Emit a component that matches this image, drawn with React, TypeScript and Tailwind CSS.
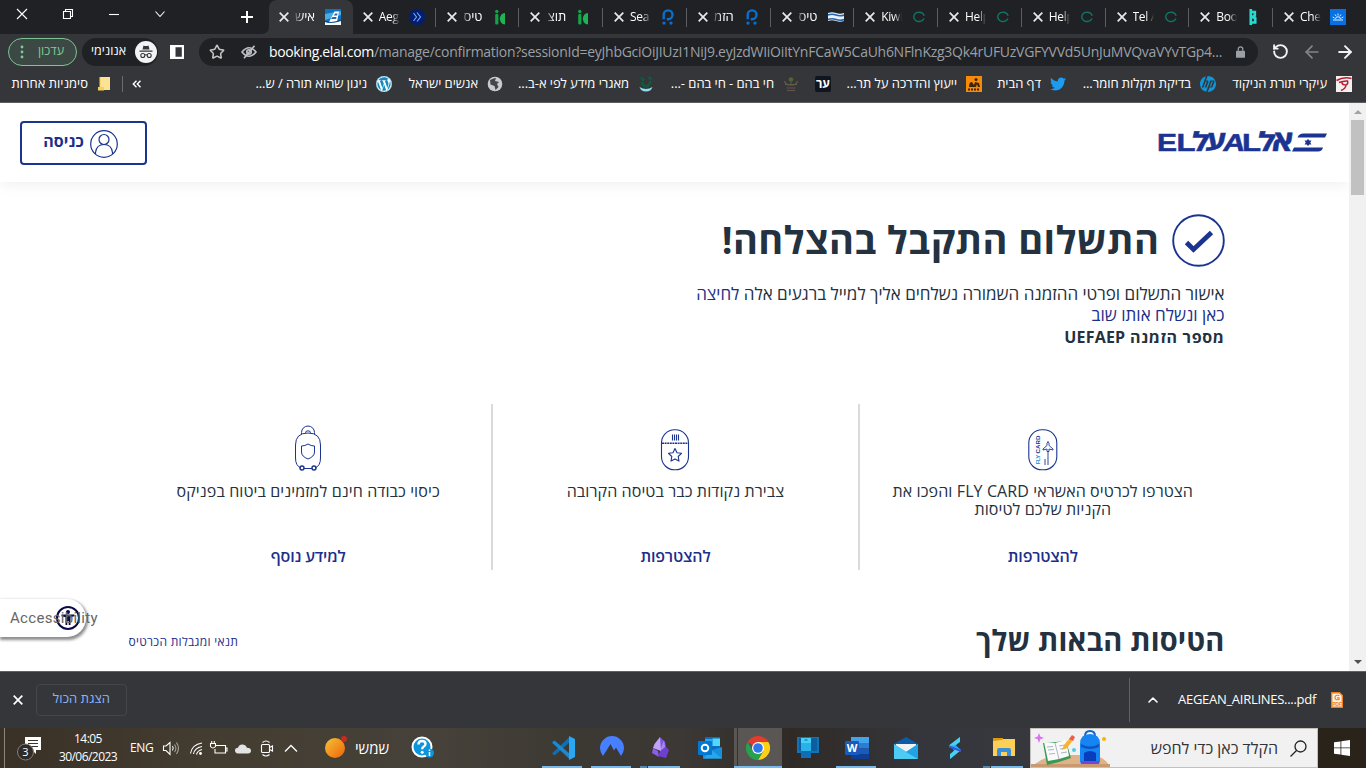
import React from "react";
import { FaTwitter, FaWordpress } from "react-icons/fa";
import { SiHp } from "react-icons/si";
import { ArrowLeft, ArrowRight, ChevronUp, RotateCcw, Star } from "lucide-react";

const Close = ({ className = "" }: { className?: string }) => (
  <svg viewBox="0 0 10 10" className={`size-[10px] shrink-0 ${className}`} stroke="currentColor" strokeWidth="1.700">
    <path d="M.7.7 9.300 9.300M9.300.7.7 9.300" />
  </svg>
);

/* ---------- tab favicons ---------- */

const ElAlFav = () => (
  <svg viewBox="0 0 16 16" className="size-4">
    <rect width="16" height="16" fill="#0b74c0" />
    <path d="M0 5 16 2v4L0 11z" fill="#4bace2" />
    <path d="M9.500 2.500H14L12 13H4z" fill="#fff" />
    <path d="M10 4.500h2.500l-.4 2H9zM7.500 8h4l-.4 2H6z" fill="#2a62ae" />
    <path d="M0 16v-3Q6 15 16 11.500V16z" fill="#f4f9fc" />
    <path d="M0 11.800q7 2.600 16-1v1.300q-8 3-16 .8z" fill="#123f83" />
  </svg>
);
const AegeanFav = () => (
  <svg viewBox="0 0 16 16" className="size-4">
    <circle cx="8" cy="8" r="8" fill="#001e73" />
    <path d="m4.500 4 3 4-3 4M8 3.500l3.500 4.500L8 12.500" fill="none" stroke="#7fa4ea" strokeWidth="1.200" />
  </svg>
);
const IcFav = () => (
  <svg viewBox="0 0 16 16" className="size-4">
    <circle cx="3.800" cy="2.500" r="1.700" fill="#14a34a" />
    <rect x="2.200" y="5" width="3.200" height="10.500" rx="1" fill="#14a34a" />
    <path d="M12 4v11.500A5.800 5.800 0 0 1 12 4z" fill="#1fb455" />
    <path d="M6.500 9.500 12 4.500V15z" fill="#1fb455" />
  </svg>
);
const PFav = () => (
  <svg viewBox="0 0 16 16" className="size-4" fill="none" stroke="#0770cf">
    <path d="M3.700 10.300V5.800a4.400 4.400 0 1 1 4.400 4.400H6.800" strokeWidth="2.400" />
    <circle cx="4" cy="14.100" r="1.700" fill="#0770cf" stroke="none" />
    <circle cx="11" cy="14.100" r="1.700" fill="#0770cf" stroke="none" />
  </svg>
);
const WaveFav = () => (
  <svg viewBox="0 0 16 16" className="size-4">
    <path d="M0 4q4-1.500 8 0t8 0v8q-4 1.500-8 0t-8 0z" fill="#e9f1fa" />
    <path d="M0 6q4-1.500 8 0t8 0M0 10.500q4-1.500 8 0t8 0" stroke="#2565ae" strokeWidth="1.700" fill="none" />
  </svg>
);
const RingFav = () => (
  <svg viewBox="0 0 16 16" className="size-4">
    <path d="M13 9.500A5.300 4.700 0 1 1 13.200 6.800" fill="none" stroke="#0d7767" strokeWidth="1.400" />
  </svg>
);
const BFav = () => (
  <svg viewBox="0 0 16 16" className="size-4">
    <path d="M4.800 0v16M4.800 3h4v3.800L6.500 8l2.700 1.200V13.500H4.800" fill="none" stroke="#24dcd0" strokeWidth="2.700" />
  </svg>
);
const SunFav = () => (
  <svg viewBox="0 0 16 16" className="size-4">
    <rect width="16" height="16" fill="#0770e3" />
    <path d="M3 11h10M5.500 10a2.500 2.200 0 0 1 5 0M8 4.500v2M5 5.500l1.200 1.700M11 5.500 9.800 7.200M2.700 8l1.800 1M13.300 8l-1.800 1" stroke="#fff" strokeWidth=".9" fill="none" />
  </svg>
);

type TabInfo = { title: string; rtl?: boolean; icon: React.ReactNode; active?: boolean; sep?: boolean };
const tabs: TabInfo[] = [
  { title: "איש", rtl: true, icon: <ElAlFav />, active: true },
  { title: "Aeg", icon: <AegeanFav />, sep: true },
  { title: "טיס", rtl: true, icon: <IcFav />, sep: true },
  { title: "תוצ", rtl: true, icon: <IcFav />, sep: true },
  { title: "Sea", icon: <PFav />, sep: true },
  { title: "הזמ", rtl: true, icon: <PFav />, sep: true },
  { title: "טיס", rtl: true, icon: <WaveFav />, sep: true },
  { title: "Kiwi", icon: <RingFav />, sep: true },
  { title: "Help", icon: <RingFav />, sep: true },
  { title: "Help", icon: <RingFav />, sep: true },
  { title: "Tel A", icon: <RingFav />, sep: true },
  { title: "Boo", icon: <BFav />, sep: true },
  { title: "Che", icon: <SunFav /> },
];

const Tab = ({ t }: { t: TabInfo }) => (
  <div className={`relative flex h-[34px] w-[83.750px] shrink-0 items-center pl-[10px] ${t.active ? "rounded-t-[8px] bg-[#35363a]" : ""}`}>
    <Close className="text-[#e8eaed]" />
    {t.rtl ? (
      <div dir="rtl" className="mr-[10px] ml-[4px] w-[22px] overflow-hidden text-[13px] whitespace-nowrap text-white [mask-image:linear-gradient(to_left,black_55%,transparent)]">{t.title}</div>
    ) : (
      <div className="mr-[9px] ml-[6px] w-[21px] overflow-hidden text-[12px] tracking-[-0.3px] whitespace-nowrap text-white [mask-image:linear-gradient(to_right,black_60%,transparent)]">{t.title}</div>
    )}
    {t.icon}
    {t.sep && <div className="absolute top-[8px] right-[1px] h-[19px] w-px bg-[#5b5d62]" />}
  </div>
);

const TabStrip = () => (
  <div className="flex h-[34px] items-center bg-[#202124] text-white">
    <svg viewBox="0 0 269 34" className="h-[34px] w-[269px] shrink-0" fill="none" stroke="#fff">
      <path d="m17 9 10 10M27 9 17 19" strokeWidth="1.100" />
      <path d="M63.500 11.500h7v7h-7zM65.500 11.500v-2h7v7h-2" strokeWidth="1.100" />
      <path d="M109 14.500h10" strokeWidth="1.100" />
      <path d="m155.500 11.500 4.500 5 4.500-5" strokeWidth="1.100" />
      <path d="M241 17h12M247 11v12" strokeWidth="2" />
      <path d="M269 34h-8q8 0 8-8z" fill="#35363a" stroke="none" />
    </svg>
    {tabs.map((t, i) => (
      <Tab key={i} t={t} />
    ))}
  </div>
);

const Toolbar = () => (
  <div className="flex h-[35px] items-center bg-[#35363a] pl-[8px]">
    <div className="flex h-[28px] w-[69px] shrink-0 items-center justify-between rounded-full border border-[#7ac594] bg-[#3c4843] pr-[12px] pl-[11px] text-[#81c995]">
      <svg viewBox="0 0 4 14" className="h-[14px] w-[4px]" fill="currentColor">
        <circle cx="2" cy="2" r="1.400" /><circle cx="2" cy="7" r="1.400" /><circle cx="2" cy="12" r="1.400" />
      </svg>
      <span className="text-[12.500px]">עדכון</span>
    </div>
    <div className="ml-[5px] flex h-[28px] w-[76px] shrink-0 items-center justify-between rounded-full bg-[#202124] pr-[1px] pl-[9px] text-white">
      <span className="text-[12.500px] whitespace-nowrap">אנונימי</span>
      <svg viewBox="0 0 22 22" className="size-[22px] shrink-0">
        <circle cx="11" cy="11" r="11" fill="#f1f3f4" />
        <path d="M7.500 8.500 8.500 4.500q2.500 1 5 0l1 4zM4.500 9.500h13v1.200h-13z" fill="#35363a" />
        <g fill="none" stroke="#35363a" strokeWidth="1.100"><circle cx="7.800" cy="14.500" r="2" /><circle cx="14.200" cy="14.500" r="2" /><path d="M9.800 14q1.200-.6 2.400 0" /></g>
      </svg>
    </div>
    <svg viewBox="0 0 14 14" className="ml-[12px] size-[14px] shrink-0"><path d="M0 0h14v14H0zM5.500 2.200v9.600h6.300V2.200z" fill="#fff" fillRule="evenodd" /></svg>
    <div className="ml-[15px] flex h-[28px] w-[1059px] shrink-0 items-center rounded-full bg-[#202124] pl-[10px] text-[#9aa0a6]">
      <Star className="size-[16px] shrink-0 text-[#c4c7c5]" strokeWidth={2.3} />
      <svg viewBox="0 0 16 14" className="ml-[16px] h-[14px] w-[16px] shrink-0" fill="none" stroke="#bdc1c6" strokeWidth="1.700">
        <path d="M1 7q7-8.500 14 0-7 8.500-14 0z" /><circle cx="8" cy="7" r="2.200" /><path d="M3 13.200 13.500.8" />
      </svg>
      <div className="ml-[12px] w-[955px] text-[14px] whitespace-nowrap">
        <span className="tracking-[-0.36px] text-white">booking.elal.com</span>
        <span className="tracking-[-0.27px]">/manage/confirmation?sessionId=eyJhbGciOiJIUzI1NiJ9.eyJzdWIiOiItYnFCaW5CaUh6NFlnKzg3Qk4rUFUzVGFYVVd5UnJuMVQvaVYvTGp4...</span>
      </div>
      <svg viewBox="0 0 10 13" className="ml-[12px] h-[12px] w-[9px] shrink-0"><rect y="5" width="10" height="8" rx="1" fill="#9aa0a6" /><path d="M2.500 5V3.200a2.500 2.500 0 0 1 5 0V5" fill="none" stroke="#9aa0a6" strokeWidth="1.400" /></svg>
    </div>
    <RotateCcw className="ml-[14px] size-[17px] shrink-0 text-[#f1f3f4]" strokeWidth={2.7} />
    <ArrowLeft className="ml-[13px] size-[20px] shrink-0 text-[#85878b]" strokeWidth={2} />
    <ArrowRight className="ml-[13px] size-[20px] shrink-0 text-[#f1f3f4]" strokeWidth={2.3} />
  </div>
);

const Bm = ({ w, text, children }: { w: string; text: string; children: React.ReactNode }) => (
  <div className="mr-[16px] flex shrink-0 items-center gap-[9px]">
    <div dir="rtl" className={`${w} shrink-0 text-[13px] tracking-[-0.05px] whitespace-nowrap text-white`}>{text}</div>
    {children}
  </div>
);

const Bookmarks = () => (
  <div className="flex h-[34px] items-center border-b border-[#5c5d60] bg-[#35363a] pb-[3px] pl-[10px]">
    <div dir="rtl" className="w-[78px] shrink-0 text-[13px] whitespace-nowrap text-white">סימניות אחרות</div>
    <svg viewBox="0 0 14 14" className="ml-[9px] size-[14px] shrink-0"><path d="M3 0h10v13H3z" fill="#fde293" /><path d="M1 10h6v3.500H1z" fill="#f5cf57" /><path d="M3 0v10" stroke="#f5cf57" /></svg>
    <div className="ml-[11px] h-[16px] w-px shrink-0 bg-[#6a6b6e]" />
    <svg viewBox="0 0 10 8" className="mr-[114px] ml-[9px] h-[8px] w-[10px] shrink-0" fill="none" stroke="#fff" strokeWidth="1.400"><path d="M4.500.8 1.300 4l3.200 3.200M8.500.8 5.300 4l3.200 3.200" /></svg>
    <Bm w="w-[111px]" text="ניגון שהוא תורה / ש...">
      <span className="flex size-4 items-center justify-center rounded-full bg-white"><FaWordpress className="size-4 text-[#1489bd]" /></span>
    </Bm>
    <Bm w="w-[70px]" text="אנשים ישראל">
      <svg viewBox="0 0 16 16" className="size-4"><circle cx="8" cy="8" r="7.300" fill="#c9cbce" /><path d="M3 4q4-2 6-2l-1 3 4 1-2 2 1.500 3-3 3-1-4-4-1.500z" fill="#45464a" /></svg>
    </Bm>
    <Bm w="w-[110px]" text="מאגרי מידע לפי א-ב...">
      <svg viewBox="0 0 16 16" className="size-4"><path d="M1.500 11q6.500 4 13 0-1.500 4.500-6.500 4.500T1.500 11z" fill="#8fdcf2" /><path d="m3 1.500 3 3M10.500 1l3 2.500M3.500 6q2 4.500 4.500 4.500T13 5" stroke="#0f5a3e" strokeWidth="2.800" fill="none" /></svg>
    </Bm>
    <Bm w="w-[104px]" text="חי בהם - חי בהם -...">
      <svg viewBox="0 0 16 16" className="size-4" opacity=".8"><circle cx="8" cy="3.500" r="2.300" fill="#557332" /><path d="M8 6v4M1.500 5q1 4 5.500 4M14.500 5q-1 4-5.500 4M2 8.500h12M3.500 12h9M4 14.500h8" stroke="#70614e" strokeWidth="1.100" fill="none" /></svg>
    </Bm>
    <div className="mr-[16px] flex size-4 shrink-0 items-center justify-center rounded-[2px] bg-[#101620] text-[12px] leading-none font-bold text-white">ער</div>
    <Bm w="w-[110px]" text="ייעוץ והדרכה על תר...">
      <svg viewBox="0 0 16 16" className="size-4"><rect width="16" height="16" fill="#f78b08" /><circle cx="10" cy="3.500" r="1.500" fill="#402506" /><path d="M3 11q0-5 3-5l2 3 1-3 4 1 1 4h-2l-1-3-1 3z" fill="#402506" /><path d="M2 13.500h12" stroke="#402506" strokeWidth="2" strokeDasharray="2 1" /></svg>
    </Bm>
    <Bm w="w-[43px]" text="דף הבית"><FaTwitter className="size-4 text-[#1d9bf0]" /></Bm>
    <Bm w="w-[109px]" text="בדיקת תקלות חומר..."><SiHp className="size-4 text-[#0f96d6]" /></Bm>
    <Bm w="w-[95px]" text="עיקרי תורת הניקוד">
      <svg viewBox="0 0 16 16" className="size-4"><rect width="16" height="16" fill="#f7eeee" /><path d="M.5 4.500q7-4 15-2M3 6.500q5-2 9-1.500M11.500 5q1 3-1.500 4M6 6.500Q6 9 10 9q-.5 4-5 5.500" stroke="#b51f33" strokeWidth="1.500" fill="none" /></svg>
    </Bm>
  </div>
);

/* ---------- page ---------- */

const ElAlLogo = () => (
  <svg viewBox="0 0 169 22" className="h-[22px] w-[169px] overflow-visible" fill="#1b3491" stroke="#1b3491" strokeWidth="0.500">
    <g fontFamily="Liberation Sans, sans-serif" fontWeight="700" fontSize="24.500">
      <text x="-1" y="20" textLength="20" lengthAdjust="spacingAndGlyphs">E</text>
      <text x="18.500" y="20" textLength="19" lengthAdjust="spacingAndGlyphs">L</text>
      <text transform="translate(64 20) skewX(-10)" textLength="22" lengthAdjust="spacingAndGlyphs">A</text>
      <text x="84" y="20" textLength="19" lengthAdjust="spacingAndGlyphs">L</text>
    </g>
    <g fontFamily="Open Sans, sans-serif" fontWeight="700">
      <text transform="translate(31 20) skewX(-12)" fontSize="26" textLength="18" lengthAdjust="spacingAndGlyphs">ל</text>
      <text transform="translate(47 18.500) skewX(-6)" fontSize="27" textLength="20" lengthAdjust="spacingAndGlyphs">ע</text>
      <text transform="translate(97 20) skewX(-12)" fontSize="26" textLength="18" lengthAdjust="spacingAndGlyphs">ל</text>
      <text transform="translate(113 20) skewX(-8)" fontSize="29" textLength="21" lengthAdjust="spacingAndGlyphs">א</text>
    </g>
    <path stroke="none" d="M139.500 6.500q1.500-4 6-4h23.500l-2 4zM134 20.500l2-4h29q-1 4-5 4zM150 7.700l1.100 1.900h2.300l-1.100 1.900 1.100 1.900h-2.300l-1.100 1.900-1.100-1.900h-2.300l1.100-1.900-1.100-1.900h2.300z" />
  </svg>
);

const FlyCard = () => (
  <svg viewBox="0 0 30 42" className="h-[42px] w-[30px]" fill="none" stroke="#1b3491" strokeWidth="1.100">
    <rect x=".8" y=".8" width="28" height="40" rx="13" />
    <g transform="translate(11.500 35.500) rotate(-90)" fontFamily="Liberation Sans, sans-serif" fontWeight="700" fontSize="6.200" stroke="none">
      <text fill="#2c8fd4" textLength="10">FLY</text>
      <text x="11" fill="#1b3491" textLength="18">CARD</text>
    </g>
    <path d="M20 36V22.500M17 36v-6M20 12.500q-1.500 1.500-1 4l-4 3.500v1l4-1v2.500h2V20l4 1v-1l-4-3.500q.5-2.500-1-4z" strokeWidth=".9" />
  </svg>
);
const Points = () => (
  <svg viewBox="0 0 30 42" className="h-[42px] w-[30px]" fill="none" stroke="#1b3491" strokeWidth="1.100">
    <rect x="1.500" y=".8" width="27" height="40" rx="13" />
    <path d="M2 14.300h26" strokeWidth="1.400" strokeDasharray="2 .6" />
    <path d="M12.500 5.500v6M14.500 5.500v6M16.500 5.500v6M18.500 5.500v6" />
    <path d="m15 19.500 2 4.200 4.500.6-3.300 3.200.8 4.600-4-2.200-4 2.200.8-4.600-3.300-3.200 4.500-.6z" strokeLinejoin="round" />
  </svg>
);
const Luggage = () => (
  <svg viewBox="0 0 28 46" className="h-[46px] w-[28px]" fill="none" stroke="#1b3491" strokeWidth="1">
    <path d="M7.500 9V7.500a6.500 6.500 0 0 1 13 0V9M11.500 7.800q0-2 2.500-2t2.500 2" />
    <path d="M7 43q-5.500-2-5.500-10V20Q1.500 8 14 8t12.500 12v13q0 8-5.500 10M10 43.500h8" />
    <path d="M14 19q3 2 6.500 2v6q0 4.500-6.500 7-6.500-2.500-6.500-7v-6q3.500 0 6.500-2z" />
    <circle cx="8" cy="43" r="2" strokeWidth="1.400" /><circle cx="20" cy="43" r="2" strokeWidth="1.400" />
  </svg>
);

const Benefit = ({ icon, children, link }: { icon: React.ReactNode; children: React.ReactNode; link: string }) => (
  <div className="flex h-[166px] flex-1 flex-col items-center pt-[20px] text-center">
    <div className="flex h-[47px] items-end">{icon}</div>
    <div dir="rtl" className="mt-[11px] h-[36px] text-[16px] leading-[18px] tracking-[0.1px] whitespace-nowrap text-[#233140]">{children}</div>
    <a dir="rtl" className="mt-[27px] text-[16px] leading-[22px] font-semibold tracking-[-0.15px] whitespace-nowrap text-[#1b2f8a]">{link}</a>
  </div>
);

const Page = () => (
  <div className="relative flex h-[568px] overflow-hidden bg-white">
    <div className="flex w-[1349px] flex-col">
      <header className="flex h-[79px] shrink-0 items-center justify-between bg-white pr-[22px] pl-[20px] shadow-[0_2px_14px_rgba(0,0,0,0.07)]">
        <button className="flex h-[44px] w-[127px] items-center gap-[6px] rounded-[4px] border-2 border-[#1b3491] pl-[21px] text-[#1b2f8a]">
          <span className="w-[41px] pb-[3px] text-[16px] font-bold tracking-[0.1px] whitespace-nowrap">כניסה</span>
          <svg viewBox="0 0 28 28" className="mt-[3px] size-[28px]" fill="none" stroke="#1b3491" strokeWidth="1.200">
            <circle cx="14" cy="14" r="13.300" /><circle cx="14" cy="9.500" r="5" /><path d="M5.500 24v-1.500q1-8 8.500-8t8.500 8V24" />
          </svg>
        </button>
        <div className="pb-[1px]"><ElAlLogo /></div>
      </header>
      <main className="mx-auto flex w-[1100px] flex-1 flex-col">
        <div dir="rtl" className="mt-[32px] flex items-center gap-[12px]">
          <svg viewBox="0 0 53 53" className="size-[53px] shrink-0" fill="none" stroke="#1b3491">
            <circle cx="26.500" cy="26.500" r="25.300" strokeWidth="1.900" />
            <path d="m14.500 28.500 7 7L39.500 18.500" strokeWidth="4.800" />
          </svg>
          <h1 className="pb-[3px] text-[38px] leading-[50px] font-bold tracking-[0.45px] whitespace-nowrap text-[#233140]">התשלום התקבל בהצלחה!</h1>
        </div>
        <div dir="rtl" className="mt-[16px] text-[17px] leading-[21px] whitespace-nowrap text-[#233140]">
          <p>אישור התשלום ופרטי ההזמנה השמורה נשלחים אליך למייל ברגעים אלה <span className="text-[#1b2f8a]">לחיצה</span></p>
          <p className="text-[#1b2f8a]">כאן ונשלח אותו שוב</p>
          <p className="mt-[2px] text-[16px] font-bold tracking-[0.65px]">מספר הזמנה <span className="tracking-[0.2px]">UEFAEP</span></p>
        </div>
        <section className="mt-[56px] -mr-[1px] flex pl-[1px]">
          <Benefit icon={<Luggage />} link="למידע נוסף">כיסוי כבודה חינם למזמינים ביטוח בפניקס</Benefit>
          <div className="w-[2px] bg-[#d9dadb]" />
          <Benefit icon={<Points />} link="להצטרפות">צבירת נקודות כבר בטיסה הקרובה</Benefit>
          <div className="w-[2px] bg-[#d9dadb]" />
          <Benefit icon={<FlyCard />} link="להצטרפות">
            <p>הצטרפו לכרטיס האשראי FLY CARD והפכו את</p>
            <p>הקניות שלכם לטיסות</p>
          </Benefit>
        </section>
        <div className="mt-[50px] flex items-center justify-between pl-[4px]">
          <a dir="rtl" className="pt-[3px] text-[12px] tracking-[0.3px] text-[#1b2f8a]">תנאי ומגבלות הכרטיס</a>
          <h2 dir="rtl" className="text-[29px] leading-[40px] font-bold tracking-[0.15px] text-[#233140]">הטיסות הבאות שלך</h2>
        </div>
      </main>
    </div>
    <div className="flex w-[17px] flex-col items-center justify-between bg-[#f1f1f1]">
      <div className="flex flex-col items-center">
        <svg viewBox="0 0 8 4" className="mt-[7px] h-[4px] w-[8px]" fill="#a3a3a3"><path d="M0 4 4 0l4 4z" /></svg>
        <div className="mt-[6px] h-[75px] w-[13px] bg-[#c1c1c1]" />
      </div>
      <svg viewBox="0 0 8 4" className="mb-[7px] h-[4px] w-[8px]" fill="#505050"><path d="M0 0h8L4 4z" /></svg>
    </div>
    <div className="absolute top-[496px] left-0 flex h-[38px] w-[86px] items-center rounded-r-full bg-white pl-[10px] shadow-[1px_2px_3px_1px_rgba(0,0,0,0.45)]">
      <svg viewBox="0 0 24 24" className="absolute top-[7px] left-[56px] size-[24px]">
        <circle cx="12" cy="12" r="11" fill="none" stroke="#0a0a4a" strokeWidth="2" />
        <circle cx="12" cy="6" r="2" fill="#0a0a4a" />
        <path d="M5.500 8.500h13v1.800l-4 1V19h-1.800v-4h-1.400v4H9.500v-7.700l-4-1z" fill="#0a0a4a" />
      </svg>
      <span className="relative font-[Roboto] text-[15px] tracking-[0.3px] text-[#666]">Accessibility</span>
    </div>
  </div>
);

const Downloads = () => (
  <div className="flex h-[57px] items-center border-t border-[#606164] bg-[#35363a] pl-[13px] text-white">
    <Close className="text-white" />
    <div className="ml-[13px] flex h-[32px] w-[91px] items-center justify-center rounded-[4px] border border-[#45464a] pb-[2px] text-[13px] font-medium tracking-[0.1px] text-[#8ab4f8]">הצגת הכול</div>
    <div className="ml-auto h-[44px] w-px bg-[#606164]" />
    <ChevronUp className="ml-[15px] size-[16px]" strokeWidth={2.4} />
    <div className="ml-[17px] w-[140px] text-[13px] tracking-[-0.28px] whitespace-nowrap">AEGEAN_AIRLINES....pdf</div>
    <svg viewBox="0 0 12 16" className="mr-[23px] ml-[13px] h-[16px] w-[12px]">
      <path d="M.7.7H8.500L11.300 3.500V15.300H.7z" fill="#fff3e4" stroke="#ee7f1a" strokeWidth="1.400" />
      <path d="M8.500 3.500Q4 2.500 4 5.500t4 2V5.800H6" fill="none" stroke="#ee7f1a" strokeWidth="1.200" />
      <text x="1.300" y="14" fontSize="5" fontWeight="700" fontFamily="Liberation Sans, sans-serif" fill="#ee7f1a" textLength="9.400">PDF</text>
    </svg>
  </div>
);

/* ---------- taskbar ---------- */

const AppIcon = ({ children, run, grouped }: { children: React.ReactNode; run?: boolean; grouped?: boolean }) => (
  <div className="relative flex h-[40px] w-[49px] shrink-0 items-center justify-center">
    <svg viewBox="0 0 24 24" className="size-[24px]">{children}</svg>
    {run && (
      <div className="absolute bottom-0 left-[4px] flex h-[2px] w-[40px] bg-[#76b9ed]">
        {grouped && <div className="h-[2px] w-[8px] border-r border-[#3a3835] bg-[#5488b0]" />}
      </div>
    )}
  </div>
);

const Taskbar = () => (
  <div className="flex h-[40px] items-center bg-[linear-gradient(90deg,#3a3126_0%,#433c30_15%,#46423a_32%,#3c3933_42%,#3b3835_50%,#2f2a26_58%,#35363c_68%,#38393f_78%,#29231b_95%,#2b2319_100%)] text-white">
    <div className="ml-[4px] h-[40px] w-px bg-[#8b867e]" />
    <svg viewBox="0 0 26 26" className="ml-[12px] size-[26px]">
      <path d="M8 2h16v13h-5v4l-4-4H8z" fill="#fff" /><path d="M11 5.500h10M11 8.500h10M11 11.500h10" stroke="#3d3529" />
      <circle cx="8.500" cy="17" r="8" fill="#2f2b26" stroke="#85807a" />
      <text x="8.500" y="21" textAnchor="middle" fontSize="11" fontFamily="Open Sans, sans-serif" fill="#fff">3</text>
    </svg>
    <div className="ml-[14px] w-[62px] text-center text-[12px] leading-[18px] tracking-[-0.55px] whitespace-nowrap">14:05<br />30/06/2023</div>
    <div className="ml-[11px] w-[24px] text-[12px] tracking-[-0.3px]">ENG</div>
    <svg viewBox="0 0 148 20" className="ml-[8px] h-[20px] w-[148px]" fill="none" stroke="#fff" strokeWidth="1.100">
      <path d="M1.500 8h2.500l4-3.500v12L4 12.500H1.500z" />
      <path d="M10.500 8q1.500 2 0 4.500" /><path d="M12.500 6.500q3 4 0 7.500M14.500 4.500q4 6 0 11.500" opacity=".55" />
      <path d="M28.500 15.500q1.500-9 11.500-10.500M31.500 16q1-6 8.500-7.500M34.500 16.500q1-4 5.500-5" /><circle cx="38.500" cy="15.500" r="1.400" fill="#fff" stroke="none" />
      <path d="M53 7.500h10.500v7.500H53v-4M63.500 10h1.500v3h-1.500M48.500 5.500h5v3q-2.500 3-5 0zM49.700 3v2.500M52.300 3v2.500" />
      <path d="M76 15.500q-3-.5-3-3t3-2.700q1.500-3.800 5-3.200 3 .5 4 3.200 4 .2 4 3 0 2.500-3 2.700z" fill="#e3e3e3" stroke="none" />
      <rect x="99.500" y="6.500" width="8" height="8" rx="1" /><path d="m107.500 9.500 3-1.500v5l-3-1.500M100.500 4.500q3.500-3 7 0M100.500 16.500q3.500 3 7 0" />
      <path d="m123 13.500 6-6 6 6" strokeWidth="1.300" />
    </svg>
    <svg viewBox="0 0 24 24" className="ml-[14px] size-[24px]">
      <defs><linearGradient id="sun" x1="0" y1="0" x2="1" y2="1"><stop offset="0" stopColor="#f5c437" /><stop offset="1" stopColor="#ee6209" /></linearGradient></defs>
      <circle cx="11" cy="12" r="10" fill="url(#sun)" /><circle cx="20" cy="3" r="3" fill="#c92a1b" />
    </svg>
    <div className="ml-[7px] w-[34px] text-[15px] whitespace-nowrap">שמשי</div>
    <svg viewBox="0 0 24 24" className="ml-[22px] size-[24px]">
      <circle cx="11" cy="11" r="9.500" fill="#0c95db" stroke="#fff" strokeWidth="2" />
      <path d="M7.500 8.500q0-3.500 3.500-3.500t3.500 3q0 1.700-2 2.700-1.300.8-1.300 2.500" fill="none" stroke="#fff" strokeWidth="2.400" /><circle cx="11.200" cy="16.300" r="1.500" fill="#fff" />
      <circle cx="18.500" cy="17" r="4.500" fill="#0c95db" /><path d="M18.500 16v4M18.500 13.500v1.500" stroke="#fff" strokeWidth="1.500" />
    </svg>
    <div className="ml-[103px] flex">
      <AppIcon run>
        <path d="M1 17.500 3.500 19.500 19 6V.5z" fill="#0f6fb5" /><path d="M1 6.500 3.500 4.500 19 18v5.500z" fill="#1a8ad4" /><path d="M18 0 24 3v18l-6 3z" fill="#29a7f2" />
      </AppIcon>
      <AppIcon run><path d="M3 20A12 12 0 1 1 21 20L16 11.500l-2 3-3.500-6.500-4 6.500z" fill="#467fff" /></AppIcon>
      <AppIcon run grouped>
        <path d="m11 1 5 5 1 6-6 5z" fill="#8254e4" /><path d="M11 1 5.500 8 4 12l8 3z" fill="#c1a3f7" /><path d="m4 12 5 3 1 6-7-4z" fill="#8b5cf0" /><path d="m17 11 3 3-3 8-8-2q1-5 8-9z" fill="#6f3fd1" /><path d="m15 4 1 7-5 4z" fill="#a588f3" />
      </AppIcon>
      <AppIcon>
        <path d="M7 1h15v16H7z" fill="#0f6cbd" /><path d="M14.500 2.500H22V10h-7.500z" fill="#50d9ff" /><path d="M7 3h7.500v7H7z" fill="#28a8ea" /><path d="M14 14l10-3v11.500H5V17z" fill="#1490df" /><path d="m5 22.500 9-8 10 8z" fill="#28a8ea" /><rect y="5" width="14" height="14" rx="1" fill="#0078d4" />
        <circle cx="7" cy="12" r="3.300" fill="none" stroke="#fff" strokeWidth="1.900" />
      </AppIcon>
      <div className="relative flex h-[40px] w-[48px] shrink-0 items-center justify-center bg-[#5a5653]">
        <svg viewBox="0 0 24 24" className="size-[24px]">
          <path d="M12 12 1.600 6a12 12 0 0 1 20.800 0z" fill="#e33b2e" /><path d="M12 12h0V6h10.400A12 12 0 0 1 12 24l5.200-9z" fill="#fdd016" /><path d="m12 24 5.200-9H6.800L1.600 6A12 12 0 0 0 12 24z" fill="#27a050" />
          <circle cx="12" cy="12" r="6" fill="#fff" /><circle cx="12" cy="12" r="4.800" fill="#2f78ea" />
        </svg>
        <div className="absolute top-0 left-[3px] h-[38px] w-px bg-[#35312e]" />
        <div className="absolute bottom-0 left-0 h-[2px] w-[48px] bg-[#76b9ed]" />
      </div>
      <div className="ml-[1px] flex">
        <AppIcon><path d="M1 1h22v16H1z" fill="#1274b8" /><path d="M3 2h18v13H3z" fill="#0c5f9f" /><path d="M5 2h10v20H5z" fill="#29b1e8" /><path d="M5 2h10v5H5z" fill="#45d1f5" /><path d="M5 15h10v7H5z" fill="#0f6eb8" /><path d="M8.500 4h3" stroke="#0c5f9f" /></AppIcon>
        <AppIcon run>
          <path d="M6 1h18v6H6z" fill="#41a5ee" /><path d="M6 7h18v5.500H6z" fill="#2b7cd3" /><path d="M6 12.500h18V18H6z" fill="#185abd" /><path d="M6 18h18v5H6z" fill="#103f91" /><rect y="5" width="14" height="14" rx="1" fill="#185abd" />
          <text x="7" y="16" textAnchor="middle" fontSize="11" fontWeight="700" fontFamily="Open Sans, sans-serif" fill="#fff">W</text>
        </AppIcon>
        <AppIcon><path d="M0 8 12 1l12 7v14H0z" fill="#0a5ea8" /><path d="M2 8h20v10H2z" fill="#f2f2f2" /><path d="M0 8l12 8L24 8v15H0z" fill="#35bff0" /><path d="m0 8 24 15H0z" fill="#4dcbf4" /><path d="m12 16 12 7V8z" fill="#1fa3e4" /></AppIcon>
        <AppIcon><path d="M17 1 6 9.500l5 4.500L7 23l11-9-5-4.500z" fill="#27a5f2" /><path d="M17 1v5l-5 3.500-6 0zM7 23v-5l5-4 6 0z" fill="#49d2ed" /><path d="m6 9.500 12 4.500v2L6 11.500z" fill="#3158dc" /></AppIcon>
        <AppIcon run grouped><path d="M1 2h10v4H1z" fill="#d99a12" /><path d="M1 5l9-1 1-1h12v17H1z" fill="#fccf57" /><path d="M5 20v-6q0-2 2-2h10q2 0 2 2v6h-4v-4H9v4z" fill="#3a8fdc" /></AppIcon>
      </div>
    </div>
    <div className="ml-auto flex h-[40px] w-[288px] shrink-0 items-center border border-[#c4c1bd] bg-[#f1f1f1] text-[#333]">
      <svg viewBox="0 0 80 38" className="h-[38px] w-[80px] shrink-0">
        <path d="M0 38q14-12 30-12h33q12 3 16 12z" fill="#dfb287" /><path d="M0 35h79v3H0z" fill="#c99a70" />
        <path d="m8 4 1.300 3.500L13 9l-3.700 1.300L8 14l-1.300-3.700L3 9l3.700-1.500z" fill="#dc72f0" />
        <path d="m12 14 13-1 10-1 5 17-12 4-12 3z" fill="#3b9956" /><path d="m13 13 11 1 11-3 3 16-10 3-11 2z" fill="#fafafa" /><path d="m24 14 4 16M16 18l6-.5M17 21l6-.5M18 25l6-.5M28 17l6-1M29 20l6-1M30 24l6-1" stroke="#aab6c5" />
        <path d="m31 21 2-5 6-7 3 2-6 8z" fill="#f9b22e" /><path d="m38 10 3-4 3 2-2 4z" fill="#ee5c4c" />
        <circle cx="43" cy="21" r="2" fill="#54cbe5" /><circle cx="73" cy="10" r="2" fill="#fab400" />
        <path d="M54 7q0-5 5-5t5 5" fill="none" stroke="#1464c7" strokeWidth="2" />
        <path d="M49 15q0-10 10-10t10 10v17q0 3-3 3H52q-3 0-3-3z" fill="#1685f4" /><path d="M50 15q9 5 18 0v3q-9 4-18 0z" fill="#0a55c3" /><path d="M53 24q6-4 12 0v9H53z" fill="#083ebd" /><rect x="50" y="32" width="18" height="3" fill="#7c43cf" />
      </svg>
      <div dir="rtl" className="ml-[39px] w-[128px] text-[16px] whitespace-nowrap">הקלד כאן כדי לחפש</div>
      <svg viewBox="0 0 17 17" className="ml-[12px] size-[17px] shrink-0" fill="none" stroke="#222" strokeWidth="1.300"><circle cx="10.500" cy="6.500" r="5.500" /><path d="m6.500 10.500-6 6" /></svg>
    </div>
    <div className="flex w-[48px] shrink-0 items-center justify-center">
      <svg viewBox="0 0 16 16" className="size-[16px]" fill="#fff"><path d="M0 2.300 6.500 1.400v6.100H0zM7.300 1.200 16 0v7.500H7.300zM0 8.300h6.500v6.300L0 13.700zM7.300 8.300H16V16l-8.700-1.200z" /></svg>
    </div>
  </div>
);

export default function App() {
  return (
    <div className="flex h-[768px] w-[1366px] flex-col overflow-hidden font-['Open_Sans','Noto_Sans',sans-serif]">
      <TabStrip />
      <Toolbar />
      <Bookmarks />
      <Page />
      <Downloads />
      <Taskbar />
    </div>
  );
}
